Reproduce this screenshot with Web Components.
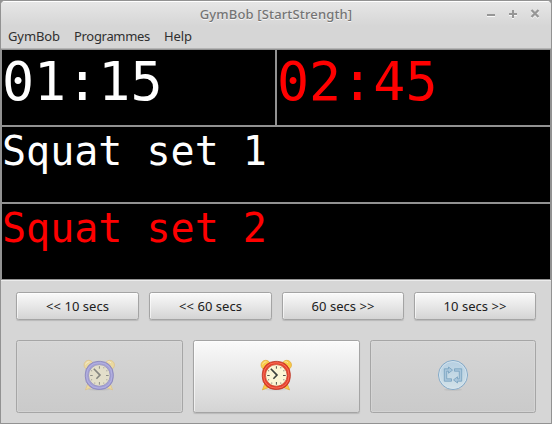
<!DOCTYPE html>
<html lang="en">
<head>
<meta charset="utf-8">
<title>GymBob [StartStrength]</title>
<style>
body{margin:0;width:552px;height:424px;overflow:hidden;background:#929292;font:13px/16px "Noto Sans","Open Sans",sans-serif;color:#303030}
</style>
</head>
<body>
<gym-window>
  <title-bar slot="title"><fit-text width="152.5">GymBob [StartStrength]</fit-text></title-bar>
  <menu-bar slot="menu">
    <fit-text width="52">GymBob</fit-text><fit-text width="76">Programmes</fit-text><fit-text width="28">Help</fit-text>
  </menu-bar>
  <lcd-line class="clock">01:15</lcd-line>
  <lcd-line class="clock red">02:45</lcd-line>
  <lcd-line class="wide">Squat set 1</lcd-line>
  <lcd-line class="wide red">Squat set 2</lcd-line>
  <button-row slot="controls">
    <push-button><fit-text width="63">&lt;&lt; 10 secs</fit-text></push-button>
    <push-button><fit-text width="63">&lt;&lt; 60 secs</fit-text></push-button>
    <push-button><fit-text width="63">60 secs &gt;&gt;</fit-text></push-button>
    <push-button><fit-text width="63">10 secs &gt;&gt;</fit-text></push-button>
  </button-row>
  <button-row slot="controls" class="big">
    <push-button disabled><alarm-icon class="faded"></alarm-icon></push-button>
    <push-button><alarm-icon></alarm-icon></push-button>
    <push-button disabled><repeat-icon></repeat-icon></push-button>
  </button-row>
</gym-window>
<script>
function define(name, html, connected) {
  const template = document.createElement('template');
  template.innerHTML = html.trim();
  customElements.define(name, class extends HTMLElement {
    constructor() {
      super();
      this.attachShadow({ mode: 'open' }).append(template.content.cloneNode(true));
    }
    connectedCallback() { if (connected) connected(this); }
  });
}

define('gym-window', `
<style>
:host{display:flex;flex-direction:column;box-sizing:border-box;width:552px;height:424px;border:1px solid #929292;border-radius:5px 5px 0 0;background:#d6d6d6;overflow:hidden}
header{height:48px;box-sizing:border-box;border-top:1px solid #fff;border-bottom:1px solid #b4b4b4;background:linear-gradient(#e6e6e6,#d6d6d6 24px)}
.screen{display:grid;grid-template-columns:273px 1fr;grid-template-rows:75px 75px 75px;gap:2px;padding:1px;background:#929292;height:229px}
main{flex:1;border-top:1px solid #ececec;padding:11px 15px 0;display:flex;flex-direction:column;gap:20px}
</style>
<header><slot name="title"></slot><slot name="menu"></slot></header>
<section class="screen"><slot></slot></section>
<main><slot name="controls"></slot></main>`);

define('title-bar', `
<style>
:host{display:grid;grid-template-columns:1fr auto 1fr;height:23px;align-items:center;color:#747474;font-weight:500;text-shadow:0 1px #f4f4f4}
svg{grid-column:3;justify-self:end;margin-right:9px;display:block}
slot{display:block;grid-column:2}
</style>
<slot></slot>
<svg width="56" height="14" viewBox="0 0 56 14" fill="none" stroke-width="2">
<g stroke="#f8f8f8" transform="translate(0 1)"><path d="M1 8h8M23 7h8M27 3v8"/><path d="M45.5 3l7 7M52.5 3l-7 7" stroke-width="2.3"/></g>
<g stroke="#969696"><path d="M1 8h8M23 7h8M27 3v8"/><path d="M45.5 3l7 7M52.5 3l-7 7" stroke-width="2.3"/></g>
</svg>`);

define('menu-bar', `
<style>:host{display:flex;gap:14px;padding:3px 7px 0;height:20px;align-items:flex-start}</style><slot></slot>`);

define('fit-text', `<style>:host{display:inline-block;white-space:nowrap}</style><slot></slot>`, el => {
  const target = Number(el.getAttribute('width'));
  const natural = el.getBoundingClientRect().width;
  el.style.letterSpacing = (target - natural) / el.textContent.length + 'px';
});

define('lcd-line', `
<style>
:host{display:block;background:#000;color:#fff;overflow:hidden;white-space:nowrap;font-family:"DejaVu Sans Mono",monospace}
:host(.clock){font-size:53.33px;line-height:64px}
:host(.wide){font-size:40px;line-height:49px;grid-column:1/-1}
:host(.red){color:#f00}
</style><slot></slot>`);

define('button-row', `
<style>
:host{display:grid;grid-template-columns:123px 123px 122px 122px;gap:10px;height:28px}
:host(.big){grid-template-columns:167px 167px 166px;height:73px}
</style><slot></slot>`);

define('push-button', `
<style>
:host{display:flex;align-items:center;justify-content:center;box-sizing:border-box;border:1px solid #a4a4a4;border-radius:2.5px;background:linear-gradient(#fafafa,#d4d4d4);box-shadow:inset 1px 1px #ffffff99,0 1px 1px #0002;color:#202020}
:host([disabled]){border-color:#a6a6a6;background:linear-gradient(#d6d6d6,#cacaca);box-shadow:inset 0 0 0 1px #dcdcdc80}
</style><slot></slot>`);

define('alarm-icon', `
<style>
:host{display:block;--rim:#e8412c;--edge:#b93422;--shine:#ff8d78;--bell:#f9cb48;--bell-edge:#e0a93c;--face:#fcf6d5;--hand:#3d423d}
:host(.faded){--rim:#a3a0d5;--edge:#8582ba;--shine:#c0bde9;--bell:#ead9a0;--bell-edge:#dcc08a;--face:#e3dfca;--hand:#858680}
svg{display:block;margin:-3px 1px 0 0}
.bell{fill:var(--bell);stroke:var(--bell-edge);stroke-width:.7}
</style>
<svg width="32" height="32" viewBox="0 0 32 32">
<ellipse cx="16" cy="30.6" rx="11" ry="1" fill="#0001"/>
<g class="bell"><circle cx="5.7" cy="6" r="4.7"/><circle cx="26.8" cy="6" r="4.7"/><path d="M5 24l-2.6 6.9L10 28zM27 24l2.6 6.9L22 28z"/></g>
<path d="M2.5 5.5q1-3 4-2.8M24.5 2.8q2-.5 3.5 1" fill="none" stroke="#fff" stroke-opacity=".45"/>
<rect x="2.3" y="2.4" width="28" height="28" rx="12.7" fill="var(--rim)" stroke="var(--edge)" stroke-width=".8"/>
<rect x="3.7" y="3.8" width="25.2" height="25.2" rx="11.6" fill="none" stroke="var(--shine)" stroke-width=".8" opacity=".75"/>
<circle cx="16.3" cy="16.4" r="10.8" fill="var(--face)" stroke="var(--edge)" stroke-width=".6"/>
<path d="M16.4 7.2v2.5M16.4 23v2.7M7.2 16.5h2.5M23 16.5h2.7" stroke="var(--hand)" stroke-width=".9"/>
<g fill="var(--hand)"><circle cx="20.8" cy="8.8" r=".5"/><circle cx="23.9" cy="11.8" r=".5"/><circle cx="23.9" cy="20.8" r=".5"/><circle cx="20.8" cy="24" r=".5"/><circle cx="11.8" cy="24" r=".5"/><circle cx="8.7" cy="20.8" r=".5"/><circle cx="8.7" cy="11.8" r=".5"/></g>
<path d="M10.8 9.7l6.2 6.4-3.6 3.6" fill="none" stroke="var(--hand)" stroke-width="1.6"/>
</svg>`);

define('repeat-icon', `
<style>:host{display:block}svg{display:block;margin-top:-3px}</style>
<svg width="32" height="32" viewBox="0 0 32 32">
<defs><linearGradient id="g" x2="0" y2="1"><stop stop-color="#b5cfe2"/><stop offset="1" stop-color="#d3e2e8"/></linearGradient></defs>
<ellipse cx="16" cy="30.8" rx="9" ry="1" fill="#0001"/>
<circle cx="16" cy="16" r="14.5" fill="url(#g)" stroke="#82a8c7"/>
<circle cx="16" cy="16" r="13.5" fill="none" stroke="#d6e5ef" stroke-width=".8"/>
<g fill="#a9c6db" stroke="#759fbe" stroke-width=".8">
<path d="M14.5 22.2H7.3V9.8h4.2V8l4 3.1-4 3.1v-2H9.7v7.6h4.8z"/>
<path d="M17.5 9.8h7.2v12.4h-4.2V24l-4-3.1 4-3.1v2h1.8v-7.6h-4.8z"/>
</g></svg>`);
</script>
</body>
</html>
